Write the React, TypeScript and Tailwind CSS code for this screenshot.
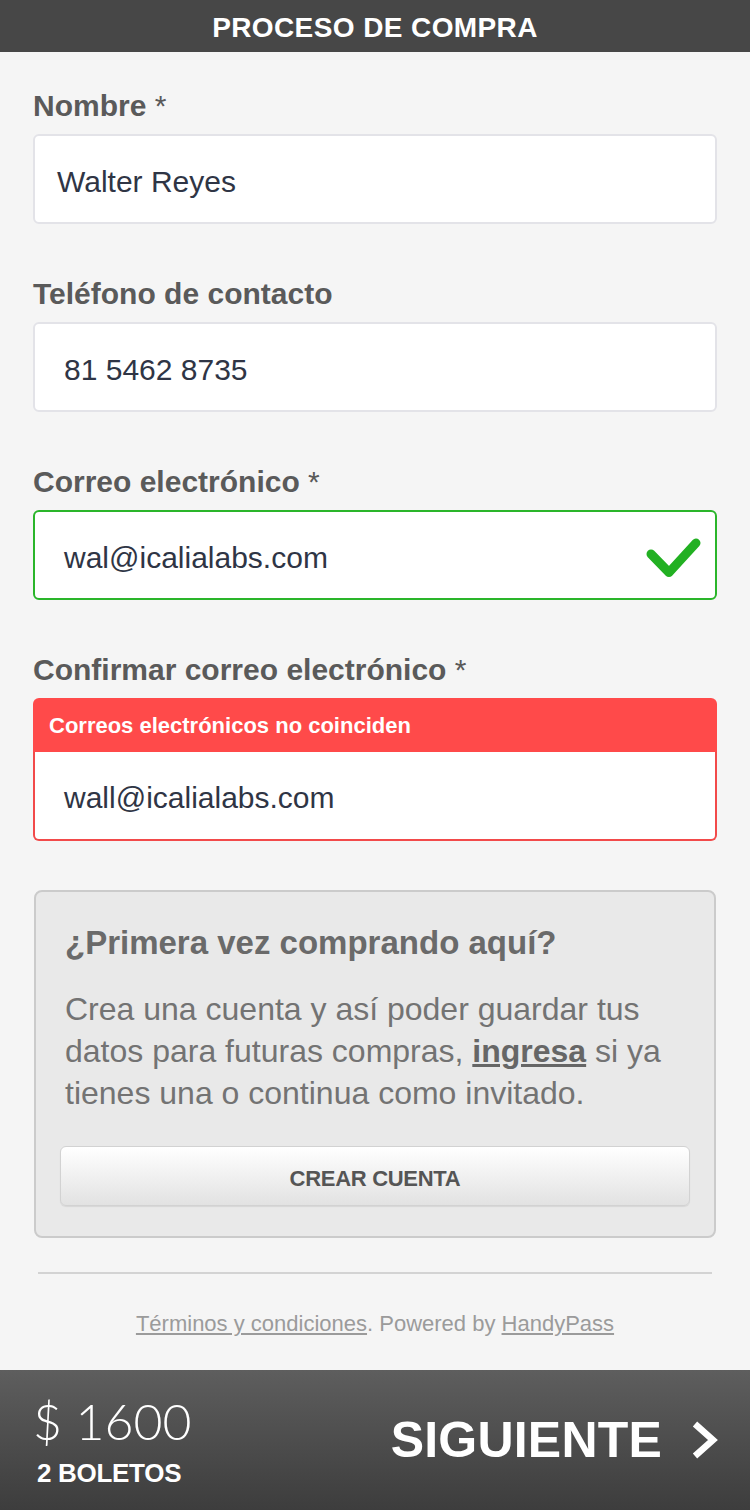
import React from 'react';

const sans = { fontFamily: '"Liberation Sans", Arial, sans-serif' };

interface FieldProps {
  label: string;
  required?: boolean;
  value: string;
  pad: string;
  state?: 'ok' | 'error';
  error?: string;
}

const Check = () => (
  <svg width="56" height="44" viewBox="0 0 56 44" className="absolute right-[14px] top-[24px]">
    <polyline points="6,18 24,36.5 51,7" fill="none" stroke="#22b022" strokeWidth="9" strokeLinecap="round" strokeLinejoin="round" />
  </svg>
);

const Field: React.FC<FieldProps> = ({ label, required, value, pad, state, error }) => {
  const box =
    state === 'ok'
      ? 'border-[#2ab52a]'
      : state === 'error'
      ? 'border-[#f24a4a] border-t-0 rounded-t-none'
      : 'border-[#e3e3e8]';
  return (
    <div className="flex flex-col">
      <label className="text-[30px] leading-[36px] font-bold text-[#5a5a5a] mb-[10px]">
        {label}
        {required && <span className="font-normal"> *</span>}
      </label>
      {error && (
        <div className="h-[54px] bg-[#ff4a4a] rounded-t-[6px] flex items-center pl-[16px] text-white font-bold text-[22px]">
          {error}
        </div>
      )}
      <div
        className={`relative bg-white border-2 rounded-[6px] flex items-center pt-[4px] text-[30px] text-[#2f3545] ${box} ${pad} ${
          error ? 'h-[89px]' : 'h-[90px]'
        }`}
      >
        {value}
        {state === 'ok' && <Check />}
      </div>
    </div>
  );
};

export default function App() {
  return (
    <div className="w-[750px] min-h-[1510px] bg-[#f5f5f5] flex flex-col" style={sans}>
      <header className="h-[52px] bg-[#474747] flex items-center justify-center pt-[3px]">
        <h1 className="text-white font-bold text-[28px] leading-[49px] tracking-[0.4px]">PROCESO DE COMPRA</h1>
      </header>

      <main className="px-[33px] pt-[36px] flex flex-col gap-[52px]">
        <Field label="Nombre" required value="Walter Reyes" pad="pl-[22px]" />
        <Field label="Teléfono de contacto" value="81 5462 8735" pad="pl-[29px]" />
        <Field label="Correo electrónico" required value="wal@icalialabs.com" pad="pl-[29px]" state="ok" />
        <Field
          label="Confirmar correo electrónico"
          required
          value="wall@icalialabs.com"
          pad="pl-[29px]"
          state="error"
          error="Correos electrónicos no coinciden"
        />
      </main>

      <section className="mx-[34px] mt-[49px] bg-[#e9e9e9] border-2 border-[#cbcbcb] rounded-[8px] px-[24px] pt-[31px] pb-[30px]">
        <div className="pl-[5px]">
          <h2 className="text-[33px] leading-[40px] font-bold text-[#6a6a6a]">¿Primera vez comprando aquí?</h2>
          <p className="mt-[25px] text-[32px] leading-[42px] text-[#737373]">
            Crea una cuenta y así poder guardar tus datos para futuras compras,{' '}
            <a className="font-bold underline text-[#666]">ingresa</a> si ya tienes una o continua como invitado.
          </p>
        </div>
        <button className="mt-[32px] w-full h-[60px] pt-[4px] rounded-[6px] border border-[#d2d2d2] bg-gradient-to-b from-white to-[#e2e2e2] shadow-[0_1px_1px_rgba(0,0,0,0.08)] text-[22px] font-bold text-[#555] tracking-[-0.3px]">
          CREAR CUENTA
        </button>
      </section>

      <div className="mx-[38px] mt-[34px] h-[2px] bg-[#d3d3d3]" />

      <p className="mt-[35px] text-center text-[22px] leading-[30px] text-[#9b9b9b]">
        <a className="underline">Términos y condiciones</a>. Powered by <a className="underline">HandyPass</a>
      </p>

      <footer className="mt-auto h-[140px] bg-gradient-to-b from-[#5e5e5e] to-[#3d3d3d] flex justify-between px-[33px] pr-[32px]">
        <div className="pt-[25px] flex flex-col">
          <span className="text-white font-light text-[50px] leading-[52px]" style={{ fontFamily: 'Lato, sans-serif' }}>
            $ 1600
          </span>
          <span className="mt-[11px] pl-[4px] text-white font-bold text-[26px] leading-[30px] tracking-[-0.3px]">2 BOLETOS</span>
        </div>
        <div className="self-center flex items-center gap-[30px]">
          <span className="text-white font-bold text-[50px] leading-[56px] tracking-[0.2px]">SIGUIENTE</span>
          <svg width="26" height="38" viewBox="0 0 26 38">
            <polyline points="3,3 21,19 3,35" fill="none" stroke="white" strokeWidth="6.5" strokeLinejoin="miter" />
          </svg>
        </div>
      </footer>
    </div>
  );
}
